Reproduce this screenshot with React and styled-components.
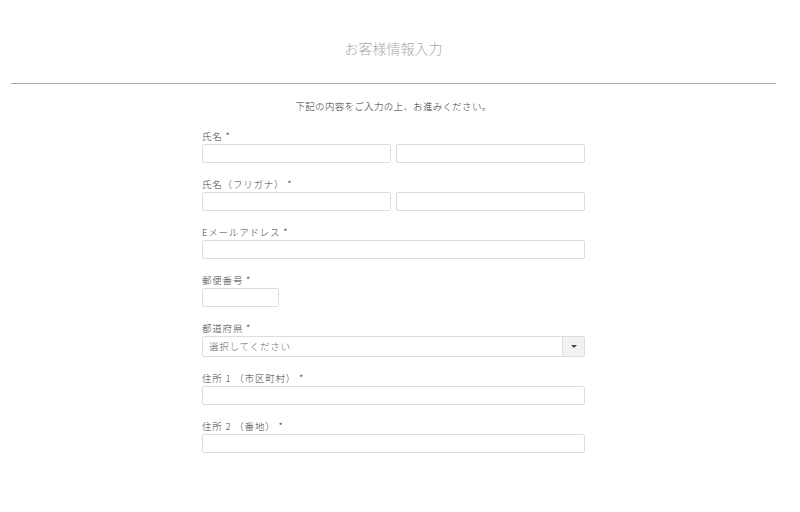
import React from "react"
import styled, { createGlobalStyle } from "styled-components"

const GlobalStyle = createGlobalStyle`
  body {
    margin: 0;
    background: #fff;
    font-family: "Noto Sans CJK JP", "Noto Sans", sans-serif;
  }
`

const Page = styled.div`
  width: 765px;
  margin-left: 11px;
  padding-top: 38px;
`

const Title = styled.h1`
  margin: 0;
  font-size: 14px;
  line-height: 20px;
  font-weight: 300;
  color: #aaa;
  text-align: center;
  padding-bottom: 25px;
  border-bottom: 1px solid #aaa;
`

const Lead = styled.p`
  margin: 15px 0 0;
  font-size: 9.5px;
  line-height: 14px;
  font-weight: 300;
  color: #333;
  letter-spacing: 0.3px;
  text-align: center;
`

const Form = styled.form`
  width: 383px;
  margin: 17px auto 0;
`

const Field = styled.div`
  margin-bottom: 15px;
`

const Label = styled.div`
  font-size: 9.5px;
  line-height: 12px;
  font-weight: 300;
  color: #444;
  letter-spacing: 0.8px;
  margin-bottom: 2px;
`

const Row = styled.div`
  display: flex;
  gap: 5px;
`

const Input = styled.input`
  display: block;
  box-sizing: border-box;
  width: ${p => p.$width || "100%"};
  flex: ${p => (p.$half ? "1" : "none")};
  min-width: 0;
  height: 19px;
  margin: 0;
  border: 1px solid #ddd;
  border-radius: 2px;
  background: #fff;
  outline: none;
`

const Select = styled.div`
  display: flex;
  box-sizing: border-box;
  height: 21px;
  border: 1px solid #ddd;
  border-radius: 2px;
  overflow: hidden;
`

const SelectText = styled.div`
  flex: 1;
  padding-left: 6px;
  font-size: 9.5px;
  line-height: 19px;
  font-weight: 300;
  color: #666;
  letter-spacing: 0.8px;
`

const SelectButton = styled.div`
  width: 21px;
  border-left: 1px solid #ddd;
  background: #f2f2f2;
  display: flex;
  align-items: center;
  justify-content: center;
`

const Arrow = styled.span`
  width: 0;
  height: 0;
  border-left: 3px solid transparent;
  border-right: 3px solid transparent;
  border-top: 3px solid #444;
`

const App = () => {
  return (
    <>
      <GlobalStyle />
      <Page>
        <Title>お客様情報入力</Title>
        <Lead>下記の内容をご入力の上、お進みください。</Lead>
        <Form>
          <Field>
            <Label>氏名 *</Label>
            <Row>
              <Input $half />
              <Input $half />
            </Row>
          </Field>
          <Field>
            <Label>氏名（フリガナ） *</Label>
            <Row>
              <Input $half />
              <Input $half />
            </Row>
          </Field>
          <Field>
            <Label>Eメールアドレス *</Label>
            <Input />
          </Field>
          <Field>
            <Label>郵便番号 *</Label>
            <Input $width="77px" />
          </Field>
          <Field>
            <Label>都道府県 *</Label>
            <Select>
              <SelectText>選択してください</SelectText>
              <SelectButton>
                <Arrow />
              </SelectButton>
            </Select>
          </Field>
          <Field>
            <Label>住所 1 （市区町村） *</Label>
            <Input />
          </Field>
          <Field>
            <Label>住所 2 （番地） *</Label>
            <Input />
          </Field>
        </Form>
      </Page>
    </>
  )
}

export default App
